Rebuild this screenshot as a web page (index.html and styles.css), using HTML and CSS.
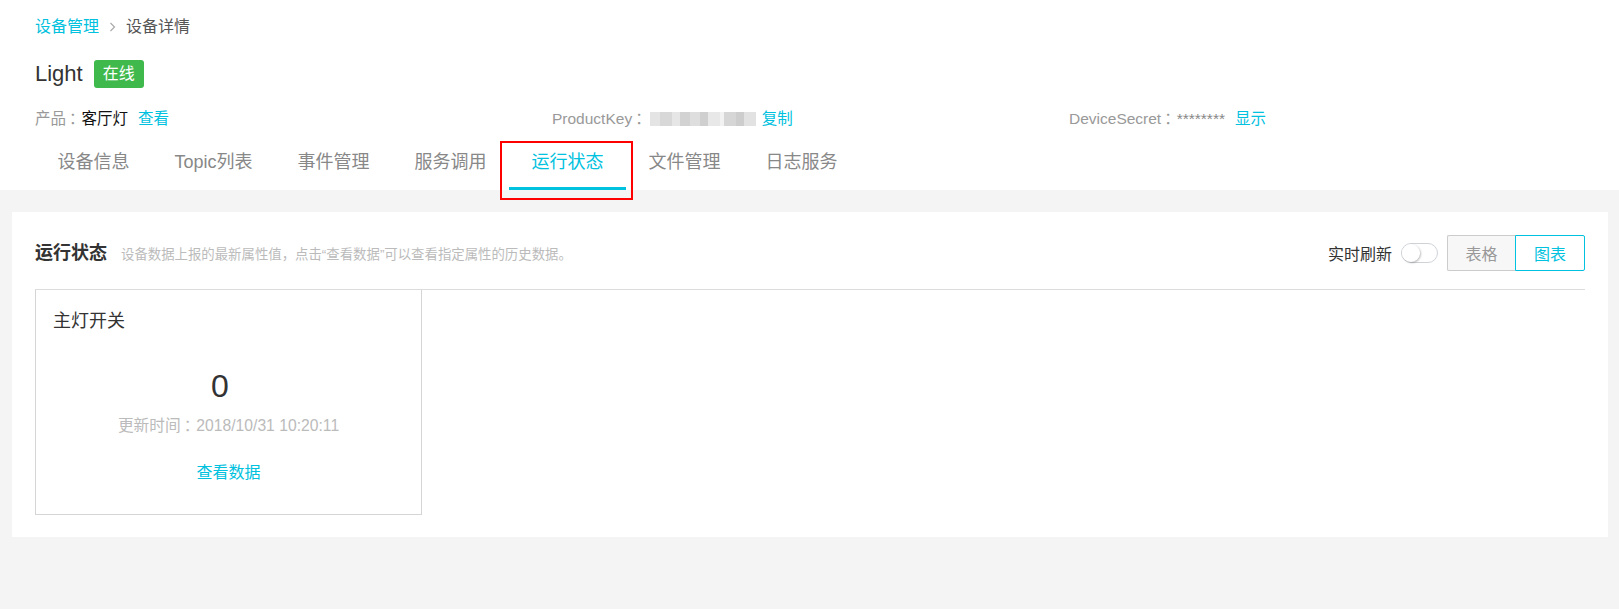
FILE: index.html
```html
<!DOCTYPE html>
<html lang="zh-CN">
<head>
<meta charset="utf-8">
<title>设备详情</title>
<link rel="stylesheet" href="styles.css">
</head>
<body>
<div class="page">
  <header class="header">
    <nav class="crumbs">
      <a class="link">设备管理</a>
      <svg class="chev" width="7" height="10" viewBox="0 0 7 10"><path d="M1.5 1 L5.5 5 L1.5 9" fill="none" stroke="#aaa" stroke-width="1.2"/></svg>
      <span class="crumb-cur">设备详情</span>
    </nav>
    <div class="title-row">
      <h1 class="title">Light</h1>
      <span class="badge">在线</span>
    </div>
    <div class="info-row">
      <div class="info"><span class="lbl">产品<span class="colon">：</span></span><span class="val">客厅灯</span><a class="link gap">查看</a></div>
      <div class="info"><span class="lbl">ProductKey<span class="colon">：</span></span><span class="blur"></span><a class="link gap-s">复制</a></div>
      <div class="info"><span class="lbl">DeviceSecret<span class="colon">：</span></span><span class="stars">********</span><a class="link gap">显示</a></div>
    </div>
    <ul class="tabs">
      <li class="tab">设备信息</li>
      <li class="tab">Topic列表</li>
      <li class="tab">事件管理</li>
      <li class="tab">服务调用</li>
      <li class="tab active">运行状态</li>
      <li class="tab">文件管理</li>
      <li class="tab">日志服务</li>
    </ul>
  </header>
  <main class="body">
    <section class="panel">
      <div class="panel-head">
        <h2 class="panel-title">运行状态</h2>
        <span class="panel-desc">设备数据上报的最新属性值，点击“查看数据”可以查看指定属性的历史数据。</span>
        <div class="spacer"></div>
        <span class="rt-label">实时刷新</span>
        <span class="switch"><span class="knob"></span></span>
        <div class="seg">
          <button class="seg-btn">表格</button>
          <button class="seg-btn on">图表</button>
        </div>
      </div>
      <div class="cards">
        <div class="card">
          <div class="card-title">主灯开关</div>
          <div class="card-value">0</div>
          <div class="card-time">更新时间<span class="colon">：</span>2018/10/31 10:20:11</div>
          <a class="link card-link">查看数据</a>
        </div>
      </div>
    </section>
  </main>
  <div class="mark"></div>
</div>
</body>
</html>
```

FILE: styles.css
```css
* { box-sizing: border-box; }
html, body { margin: 0; padding: 0; }
body {
  background: #f4f4f4;
  font-family: "Liberation Sans", "Noto Sans CJK SC", sans-serif;
  color: #333;
  width: 1619px;
  height: 609px;
  overflow: hidden;
}
.page { position: relative; }
.link { color: #00c1de; cursor: pointer; }
.colon { padding-left: 0.2em; letter-spacing: -0.2em; }

.header {
  background: #fff;
  padding: 17px 33px 0 35px;
}
.crumbs {
  display: flex;
  align-items: center;
  font-size: 16px;
  line-height: 20px;
  height: 20px;
}
.chev { margin: 0 10px 0 10px; }
.crumb-cur { color: #555; }

.title-row {
  display: flex;
  align-items: center;
  margin-top: 23px;
  height: 28px;
}
.title {
  margin: 0;
  font-size: 22px;
  font-weight: normal;
  color: #333;
  line-height: 28px;
}
.badge {
  margin-left: 11px;
  width: 50px;
  height: 28px;
  line-height: 28px;
  text-align: center;
  background: #3fb94b;
  color: #fff;
  border-radius: 3px;
  font-size: 16px;
}

.info-row {
  display: grid;
  grid-template-columns: 517px 517px 1fr;
  margin-top: 21px;
  font-size: 15.5px;
  line-height: 20px;
  height: 20px;
}
.info { display: flex; align-items: center; white-space: nowrap; height: 20px; }
.lbl { color: #999; }
.val { color: #111; }
.stars { color: #888; }
.gap { margin-left: 10px; }
.gap-s { margin-left: 6px; }
.blur {
  display: inline-block;
  width: 106px;
  height: 14px;
  margin-left: 2px;
  background:
    linear-gradient(90deg,
      #e4e4e4 0 10px, #d8d8d8 10px 22px, #e6e6e6 22px 30px, #d2d2d2 30px 40px,
      #dedede 40px 50px, #cfcfcf 50px 58px, #e8e8e8 58px 70px, #f2f2f2 70px 74px,
      #d6d6d6 74px 86px, #cdcdcd 86px 94px, #e2e2e2 94px 106px);
  filter: blur(0.6px);
}

.tabs {
  list-style: none;
  margin: 0;
  padding: 0;
  display: flex;
}
.tab {
  padding: 21px 22.5px 13px;
  font-size: 18px;
  line-height: 24px;
  color: #888;
  border-bottom: 3px solid transparent;
}
.tab.active {
  color: #00c1de;
  border-bottom-color: #00c1de;
}

.body { padding: 22px 11px 0 12px; }
.panel {
  background: #fff;
  padding: 23px 23px 22px;
}
.panel-head {
  display: flex;
  align-items: center;
  height: 55px;
  padding-bottom: 18px;
  border-bottom: 1px solid #dcdcdc;
}
.panel-title {
  margin: 0;
  font-size: 18px;
  font-weight: bold;
  color: #333;
  line-height: 24px;
}
.panel-desc {
  margin-left: 14px;
  font-size: 13.4px;
  color: #bbb;
  white-space: nowrap;
}
.spacer { flex: 1; }
.rt-label { font-size: 16px; color: #333; }
.switch {
  position: relative;
  margin-left: 9px;
  width: 37px;
  height: 20px;
  border: 1px solid #cfd3d8;
  border-radius: 10px;
  background: #fff;
}
.knob {
  position: absolute;
  left: 0;
  top: 0;
  width: 18px;
  height: 18px;
  border-radius: 50%;
  background: #fff;
  box-shadow: 1px 1px 2px rgba(0,0,0,0.25);
}
.seg { display: flex; margin-left: 9px; height: 36px; }
.seg-btn {
  height: 36px;
  font-family: inherit;
  font-size: 16px;
  padding: 0;
  background: #f7f7f7;
  color: #999;
  border: 1px solid #ccc;
  border-radius: 2px 0 0 2px;
  width: 68px;
  border-right: none;
}
.seg-btn.on {
  width: 70px;
  background: #fff;
  color: #00c1de;
  border: 1px solid #00c1de;
  border-radius: 0 2px 2px 0;
}

.cards { display: flex; }
.card {
  width: 387px;
  height: 225px;
  border: 1px solid #d5d5d5;
  border-top: none;
  display: flex;
  flex-direction: column;
  align-items: center;
  padding-top: 19px;
}
.card-title {
  align-self: flex-start;
  padding-left: 17px;
  font-size: 18px;
  line-height: 24px;
  color: #333;
}
.card-value {
  margin-top: 33px;
  font-size: 32px;
  line-height: 40px;
  color: #333;
  padding-right: 17px;
}
.card-time {
  margin-top: 10px;
  font-size: 15.7px;
  line-height: 20px;
  height: 20px;
  color: #bbb;
}
.card-link {
  margin-top: 27px;
  font-size: 16px;
  line-height: 20px;
}

.mark {
  position: absolute;
  left: 500px;
  top: 141px;
  width: 133px;
  height: 59px;
  border: 2px solid #f00;
  pointer-events: none;
}
```
